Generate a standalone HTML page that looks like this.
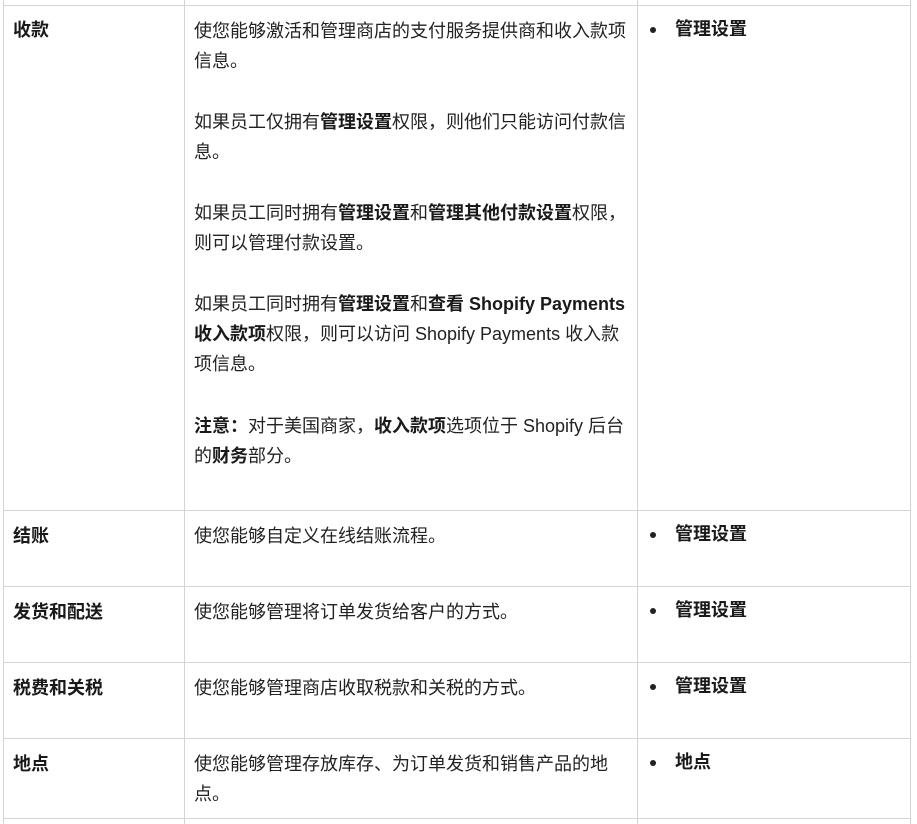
<!DOCTYPE html>
<html><head><meta charset="utf-8"><style>
body{margin:0;width:917px;height:824px;background:#fff;position:relative;overflow:hidden;font-family:"Liberation Sans","Noto Sans CJK SC",sans-serif;font-size:18px;color:#222;}
.h{position:absolute;background:#d4d4d8;height:1px;left:3px;width:908px}
.v{position:absolute;background:#d4d4d8;width:1px;top:0;height:824px}
.t{position:absolute;line-height:30px;white-space:nowrap}
b{font-weight:bold;color:#1a1a1a}
.bl{position:absolute;width:6px;height:6px;border-radius:50%;background:#222}
</style></head><body>
<div class="h" style="top:5px"></div>
<div class="h" style="top:510px"></div>
<div class="h" style="top:586px"></div>
<div class="h" style="top:662px"></div>
<div class="h" style="top:738px"></div>
<div class="h" style="top:818px"></div>
<div class="v" style="left:3px"></div>
<div class="v" style="left:184px"></div>
<div class="v" style="left:637px"></div>
<div class="v" style="left:910px"></div>

<div class="t" style="left:13px;top:15px"><b>收款</b></div>
<div class="t" style="left:194px;top:16px">使您能够激活和管理商店的支付服务提供商和收入款项<br>信息。</div>
<div class="t" style="left:194px;top:107px">如果员工仅拥有<b>管理设置</b>权限，则他们只能访问付款信<br>息。</div>
<div class="t" style="left:194px;top:198px">如果员工同时拥有<b>管理设置</b>和<b>管理其他付款设置</b>权限，<br>则可以管理付款设置。</div>
<div class="t" style="left:194px;top:289px">如果员工同时拥有<b>管理设置</b>和<b>查看 Shopify Payments<br>收入款项</b>权限，则可以访问 Shopify Payments 收入款<br>项信息。</div>
<div class="t" style="left:194px;top:411px"><b>注意：</b>对于美国商家，<b>收入款项</b>选项位于 Shopify 后台<br>的<b>财务</b>部分。</div>
<div class="bl" style="left:650px;top:27px"></div>
<div class="t" style="left:675px;top:14px"><b>管理设置</b></div>

<div class="t" style="left:13px;top:521px"><b>结账</b></div>
<div class="t" style="left:194px;top:521px">使您能够自定义在线结账流程。</div>
<div class="bl" style="left:650px;top:532px"></div>
<div class="t" style="left:675px;top:519px"><b>管理设置</b></div>

<div class="t" style="left:13px;top:597px"><b>发货和配送</b></div>
<div class="t" style="left:194px;top:597px">使您能够管理将订单发货给客户的方式。</div>
<div class="bl" style="left:650px;top:608px"></div>
<div class="t" style="left:675px;top:595px"><b>管理设置</b></div>

<div class="t" style="left:13px;top:673px"><b>税费和关税</b></div>
<div class="t" style="left:194px;top:673px">使您能够管理商店收取税款和关税的方式。</div>
<div class="bl" style="left:650px;top:684px"></div>
<div class="t" style="left:675px;top:671px"><b>管理设置</b></div>

<div class="t" style="left:13px;top:749px"><b>地点</b></div>
<div class="t" style="left:194px;top:749px">使您能够管理存放库存、为订单发货和销售产品的地<br>点。</div>
<div class="bl" style="left:650px;top:760px"></div>
<div class="t" style="left:675px;top:747px"><b>地点</b></div>
</body></html>
